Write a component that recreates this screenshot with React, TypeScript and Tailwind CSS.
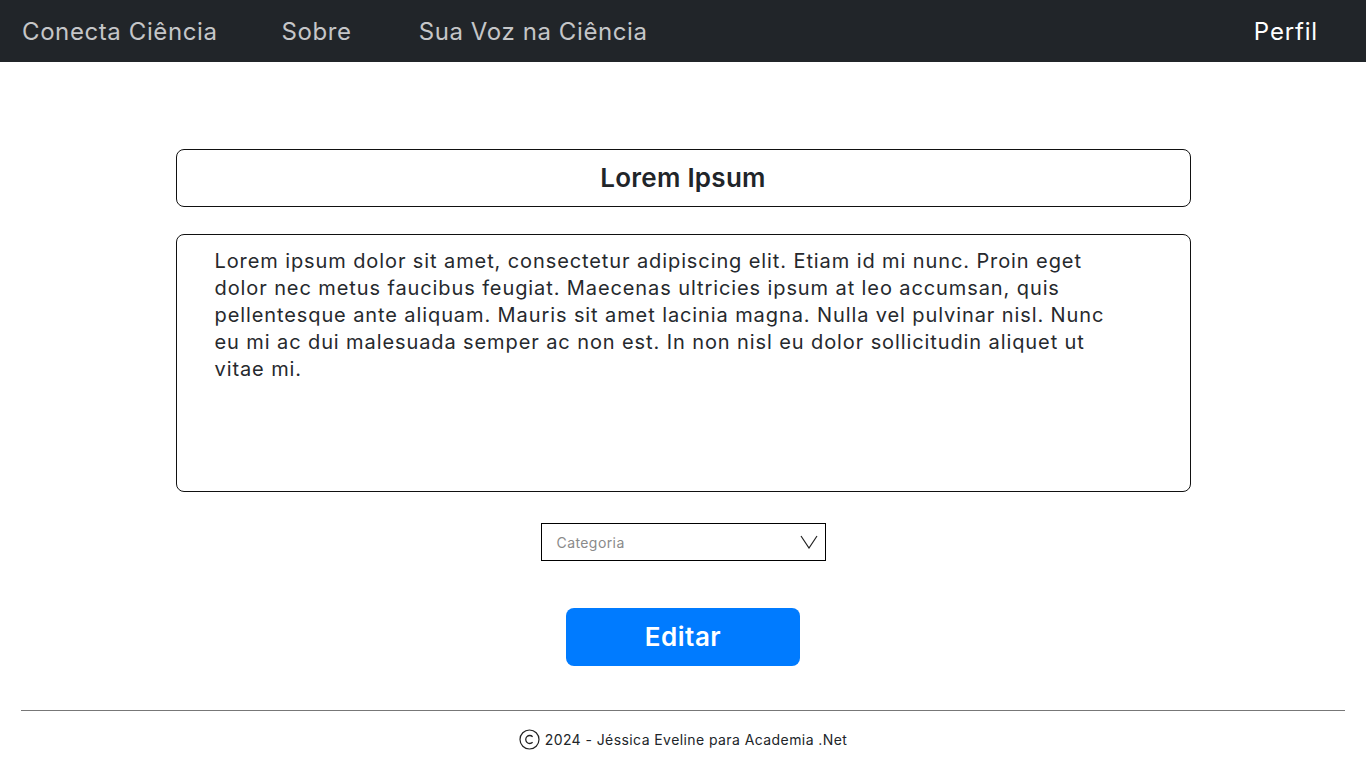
import React from "react";

export default function App() {
  return (
    <div className="min-h-[768px] bg-white text-[#212529]" style={{ fontFamily: "Inter, 'Noto Sans', sans-serif" }}>
      <nav className="h-[62px] bg-[#212529] flex items-center px-[22px] pt-[2px]">
        <a className="text-[24px] text-[#c5c6c8] leading-none tracking-[0.025em]">Conecta Ciência</a>
        <a className="ml-[64px] text-[24px] text-[#c5c6c8] leading-none tracking-[0.025em]">Sobre</a>
        <a className="ml-[67px] text-[24px] text-[#c5c6c8] leading-none tracking-[0.025em]">Sua Voz na Ciência</a>
        <a className="ml-auto mr-[26px] text-[24px] text-white font-normal leading-none tracking-[0.035em]">Perfil</a>
      </nav>

      <main className="flex flex-col items-center">
        <div className="mt-[87px] w-[1015px] h-[58px] border border-[#111] rounded-[8px] flex items-center justify-center">
          <h1 className="text-[26px] font-semibold leading-none tracking-[0.01em]">Lorem Ipsum</h1>
        </div>

        <div className="mt-[27px] w-[1015px] h-[258px] border border-[#111] rounded-[8px] pl-[38px] pt-[13px]">
          <p className="w-[905px] text-[20px] leading-[27px] text-[#26292d] tracking-[0.045em]">
            Lorem ipsum dolor sit amet, consectetur adipiscing elit. Etiam id mi nunc. Proin eget dolor nec metus faucibus feugiat. Maecenas ultricies ipsum at leo accumsan, quis pellentesque ante aliquam. Mauris sit amet lacinia magna. Nulla vel pulvinar nisl. Nunc eu mi ac dui malesuada semper ac non est. In non nisl eu dolor sollicitudin aliquet ut vitae mi.
          </p>
        </div>

        <div className="mt-[31px] w-[285px] h-[38px] border border-black flex items-center pl-[15px] pr-[7px]">
          <span className="text-[14px] text-[#8a8a8a] tracking-[0.03em]">Categoria</span>
          <svg className="ml-auto" width="18" height="14" viewBox="0 0 18 14" fill="none">
            <path d="M1 1 L9 13 L17 1" stroke="#222" strokeWidth="1.2" />
          </svg>
        </div>

        <button className="mt-[47px] w-[234px] h-[58px] rounded-[8px] bg-[#007bff] text-white text-[26px] font-semibold leading-none tracking-[0.02em]">
          Editar
        </button>
      </main>

      <footer className="mt-[44px] px-[21px]">
        <div className="border-t border-[#777]" />
        <div className="h-[58px] flex items-center justify-center gap-[5px] text-[14px] text-[#212529] pb-[1px] tracking-[0.03em]">
          <svg width="21" height="21" viewBox="0 0 21 21" fill="none">
            <circle cx="10.5" cy="10.5" r="9.5" stroke="#222" strokeWidth="1.2" />
            <path d="M13.6 7.7 A4 4 0 1 0 13.6 13.3" stroke="#222" strokeWidth="1.3" fill="none" />
          </svg>
          <span>2024 - Jéssica Eveline para Academia .Net</span>
        </div>
      </footer>
    </div>
  );
}
